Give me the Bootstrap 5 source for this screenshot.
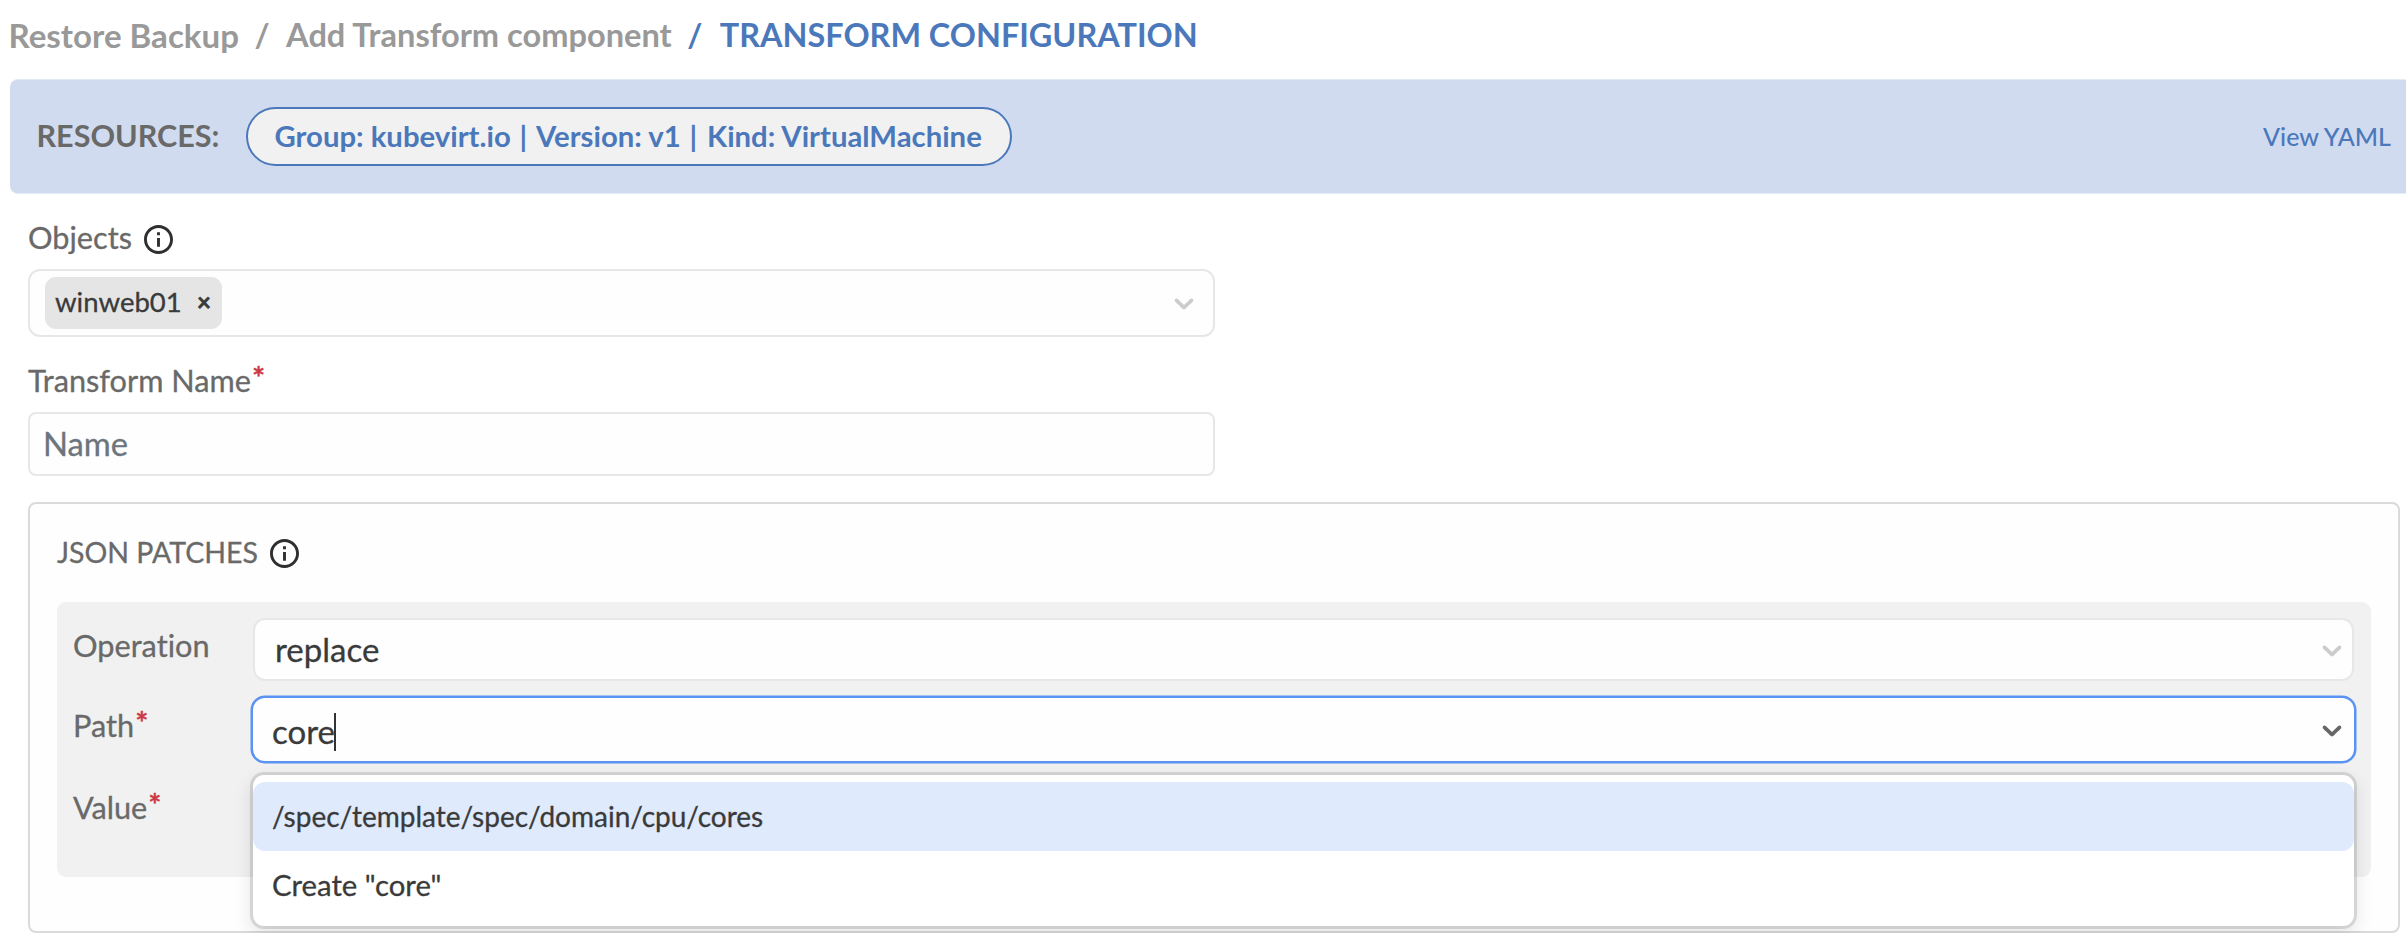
<!DOCTYPE html>
<html lang="en">
<head>
<meta charset="utf-8">
<meta name="viewport" content="width=device-width, initial-scale=1">
<title>Transform Configuration</title>
<link href="https://cdn.jsdelivr.net/npm/bootstrap@5.3.0/dist/css/bootstrap.min.css" rel="stylesheet">
<style>
:root{--accent:#4b78bb;--line:#e7e7e7}
body{font-family:Lato,"Liberation Sans",sans-serif;background:#fff;color:#696969;overflow:hidden;font-variant-ligatures:none}
.crumbs{height:70px;padding:1px 0 0 8.5px;font-size:32.4px;font-weight:700;color:#999;white-space:pre;margin-bottom:9px}
.crumbs .first{font-size:33.1px}
.crumbs .second{font-size:32.6px}
.crumbs .slash{font-weight:700;margin:0 16.5px 0 15.5px}
.crumbs .current,.crumbs .current-slash{color:var(--accent)}
.crumbs .current-slash{margin-right:17.5px}
.resources{height:115px;margin-left:10px;padding:0 15px 0 26.5px;background:#d1dbef;border-top:1px solid #e4eaf6;border-bottom:1px solid #e4eaf6;border-radius:8px 0 0 8px}
.resources-title{font-size:30.5px;font-weight:700;padding-bottom:2px;width:209.5px}
.resource-pill{height:59px;width:766px;padding:0 0 1px 26.5px;font-size:29.3px;font-weight:700;color:var(--accent);background:#f1f1f1;border:2px solid var(--accent);border-radius:30px;white-space:pre}
.resource-pill i{font-style:normal;margin:0 2.8px 0 1.7px}
.view-link{font-size:25px;color:var(--accent);text-decoration:none;font-weight:500}
.content{padding:20px 6px 0 28px}
.field-label{font-size:30.7px;line-height:46px}
.field-label,.patch-title,.chip,.select,.option,.name-input{-webkit-text-stroke:.3px currentColor}
.objects-label{padding-top:1px;line-height:45px}
.req{font-size:31px;font-weight:700;color:#cc3944;line-height:0;vertical-align:3px;margin-left:1px}
.info{width:29px;height:29px;fill:#2f2f2f;flex:none;margin:4px 0 0 12px}
.patch-title .info{margin-top:2px}
.box{background:#fefefe;border:2px solid var(--line);border-radius:12px}
.half{width:1187px}
.select-objects{height:68px;margin-top:9px;padding:0 13px 0 15px}
.chip{height:52px;width:177px;padding:0 11px 2px 10px;background:#e5e5e5;border-radius:11px;font-size:27.5px;color:#3a3a3a}
.chip b{font-size:24px;-webkit-text-stroke:.7px currentColor}
.name-input{height:64px;margin-top:8px;padding:0 0 2px 13px;border-radius:8px;font-size:32.8px;color:#6c757d}
.name-input::placeholder{color:#6c757d;opacity:1}
.chev{width:32px;height:32px;fill:#ccc;flex:none}
.patch-card{height:431px;margin-top:26px;padding:25px 27px 0 27px;border:2px solid #dadada;border-radius:8px;background:#fefefe}
.patch-title{font-size:28.5px;line-height:46px}
.patch-panel{height:275px;margin-top:27px;padding:16px 17px 0 16px;background:#f1f1f1;border-radius:9px}
.prow{height:63px;margin-bottom:17px}
.prow .field-label{width:180px;padding-bottom:7px}
.prow .value-label{padding-bottom:3px}
.prow .select{height:63px;padding:0 4px 0 20px;font-size:33px;color:#3a3a3a}
.prow .focused{border:0;box-shadow:0 0 0 2.5px #5a93f2;padding:5px 6px 0 19px}
.caret{width:2px;height:38px;background:#333;margin:-1px 0 0 -1px}
.menu{top:77px;left:0;right:0;height:151px;padding-top:7px;background:#fff;border-radius:11px;box-shadow:0 0 0 3px rgba(0,0,0,.11),0 6px 18px 2px rgba(0,0,0,.11);z-index:5}
.option{height:69px;padding:0 0 1px 19px;font-size:28px;color:#3a3a3a;border-radius:12px}
.option.active{background:#dfeafd}
.option.create{font-size:29.3px}
</style>
</head>
<body>
<nav class="crumbs d-flex align-items-center"><span class="first">Restore Backup</span><span class="slash">/</span><span class="second">Add Transform component</span><span class="slash current-slash">/</span><span class="current">TRANSFORM CONFIGURATION</span></nav>

<section class="resources d-flex align-items-center">
  <div class="resources-title">RESOURCES:</div>
  <div class="resource-pill"><div class="d-flex align-items-center h-100"><span>Group: kubevirt.io <i>|</i> Version: v1 <i>|</i> Kind: VirtualMachine</span></div></div>
  <a class="view-link ms-auto" href="#">View YAML</a>
</section>

<main class="content">
  <div class="d-flex align-items-center field-label objects-label">Objects
    <svg class="info" viewBox="2 2 20 20"><path d="M11 7h2v2h-2zm0 4h2v6h-2zm1-9C6.480 2 2 6.480 2 12s4.480 10 10 10 10-4.480 10-10S17.520 2 12 2m0 18c-4.410 0-8-3.590-8-8s3.590-8 8-8 8 3.590 8 8-3.590 8-8 8"/></svg>
  </div>
  <div class="box half select-objects d-flex align-items-center justify-content-between">
    <span class="chip d-flex align-items-center justify-content-between">winweb01 <b>×</b></span>
    <svg class="chev" viewBox="0 0 20 20"><path d="M4.516 7.548c0.436-0.446 1.043-0.481 1.576 0l3.908 3.747 3.908-3.747c0.533-0.481 1.141-0.446 1.574 0 0.436 0.445 0.408 1.197 0 1.615-0.406 0.418-4.695 4.502-4.695 4.502-0.217 0.223-0.502 0.335-0.787 0.335s-0.570-0.112-0.789-0.335c0 0-4.287-4.084-4.695-4.502s-0.436-1.170 0-1.615z"/></svg>
  </div>
  <div class="field-label" style="margin-top:21px">Transform Name<span class="req">*</span></div>
  <input class="box half name-input d-block" type="text" placeholder="Name">

  <section class="patch-card">
    <div class="d-flex align-items-center patch-title">JSON PATCHES
      <svg class="info" viewBox="2 2 20 20"><path d="M11 7h2v2h-2zm0 4h2v6h-2zm1-9C6.480 2 2 6.480 2 12s4.480 10 10 10 10-4.480 10-10S17.520 2 12 2m0 18c-4.410 0-8-3.590-8-8s3.590-8 8-8 8 3.590 8 8-3.590 8-8 8"/></svg>
    </div>
    <div class="patch-panel">
      <div class="prow d-flex align-items-center">
        <div class="field-label">Operation</div>
        <div class="box select flex-grow-1 d-flex align-items-center justify-content-between"><span>replace</span>
          <svg class="chev" viewBox="0 0 20 20"><path d="M4.516 7.548c0.436-0.446 1.043-0.481 1.576 0l3.908 3.747 3.908-3.747c0.533-0.481 1.141-0.446 1.574 0 0.436 0.445 0.408 1.197 0 1.615-0.406 0.418-4.695 4.502-4.695 4.502-0.217 0.223-0.502 0.335-0.787 0.335s-0.570-0.112-0.789-0.335c0 0-4.287-4.084-4.695-4.502s-0.436-1.170 0-1.615z"/></svg>
        </div>
      </div>
      <div class="prow d-flex align-items-center">
        <div class="field-label">Path<span class="req">*</span></div>
        <div class="position-relative flex-grow-1">
          <div class="box select focused d-flex align-items-center"><span>core</span><span class="caret"></span>
            <svg class="chev ms-auto" style="fill:#666;margin-top:-5px" viewBox="0 0 20 20"><path d="M4.516 7.548c0.436-0.446 1.043-0.481 1.576 0l3.908 3.747 3.908-3.747c0.533-0.481 1.141-0.446 1.574 0 0.436 0.445 0.408 1.197 0 1.615-0.406 0.418-4.695 4.502-4.695 4.502-0.217 0.223-0.502 0.335-0.787 0.335s-0.570-0.112-0.789-0.335c0 0-4.287-4.084-4.695-4.502s-0.436-1.170 0-1.615z"/></svg>
          </div>
          <div class="menu position-absolute">
            <div class="option active d-flex align-items-center">/spec/template/spec/domain/cpu/cores</div>
            <div class="option create d-flex align-items-center">Create "core"</div>
          </div>
        </div>
      </div>
      <div class="prow d-flex align-items-center">
        <div class="field-label value-label">Value<span class="req">*</span></div>
      </div>
    </div>
  </section>
</main>
<script src="https://cdn.jsdelivr.net/npm/bootstrap@5.3.0/dist/js/bootstrap.bundle.min.js"></script>
</body>
</html>
